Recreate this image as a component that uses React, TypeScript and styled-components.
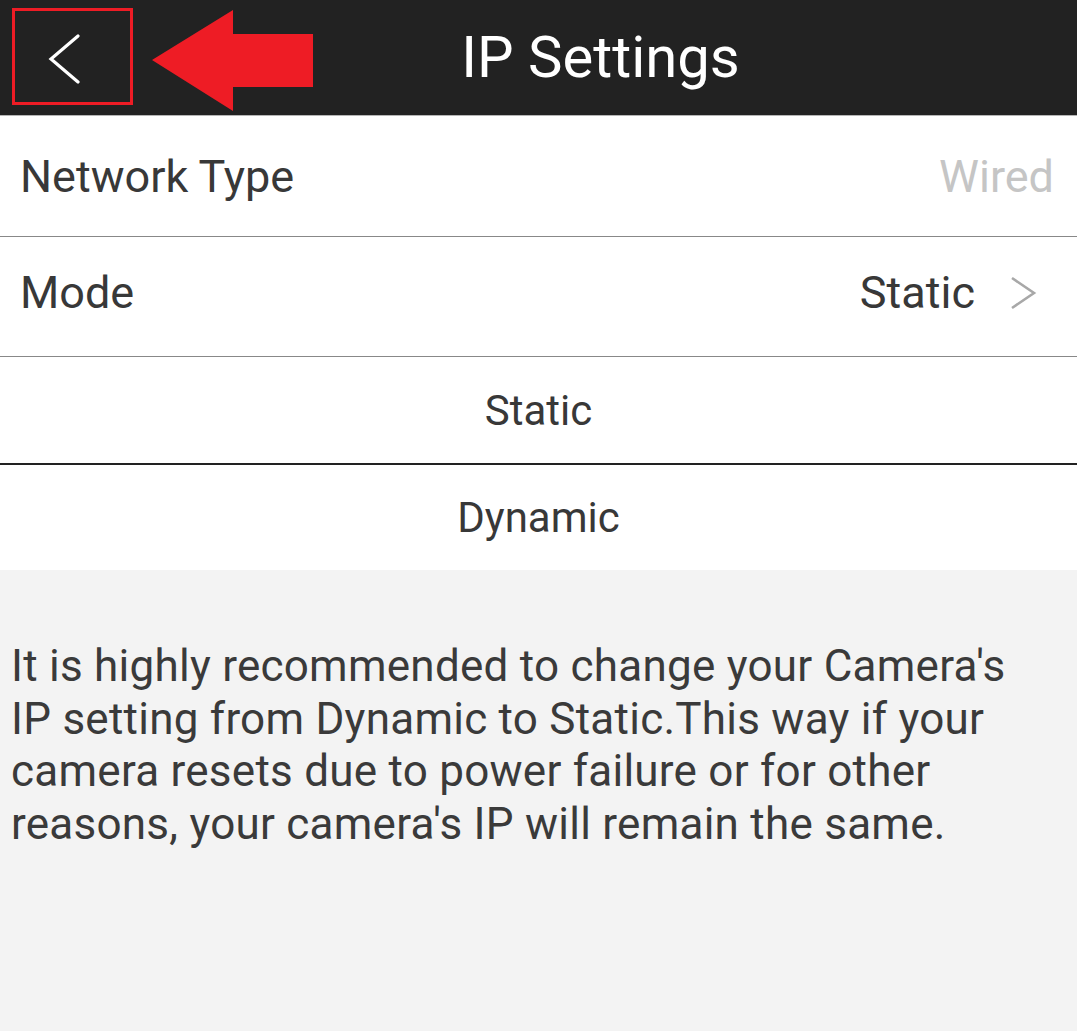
import React from "react";
import styled, { createGlobalStyle } from "styled-components";

const Global = createGlobalStyle`
  html, body { margin: 0; padding: 0; background: #f3f3f3; }
  body { font-family: Roboto, "Noto Sans", sans-serif; }
`;

const Page = styled.div`
  width: 1077px;
  min-height: 1031px;
  background: #f3f3f3;
  display: flex;
  flex-direction: column;
`;

const Header = styled.header`
  position: relative;
  height: 116px;
  background: #222222;
  border-bottom: 1px solid #b5b5b5;
  display: flex;
  align-items: center;
  box-sizing: border-box;
`;

const BackSlot = styled.div`
  width: 140px;
  height: 100%;
  display: flex;
  align-items: center;
  padding-left: 48px;
  box-sizing: border-box;
`;

const Title = styled.h1`
  flex: 1;
  margin: 0;
  padding-right: 16px;
  text-align: center;
  color: #ffffff;
  font-size: 58px;
  font-weight: 400;
  line-height: 1;
  padding-bottom: 2px;
`;

const Highlight = styled.div`
  position: absolute;
  left: 12px;
  top: 8px;
  width: 121px;
  height: 97px;
  border: 3px solid #ee1c25;
  box-sizing: border-box;
  pointer-events: none;
`;

const Pointer = styled.svg`
  position: absolute;
  left: 152px;
  top: 10px;
`;

const List = styled.div`
  background: #ffffff;
  display: flex;
  flex-direction: column;
`;

const Row = styled.div<{ $h: number; $line?: string }>`
  height: ${(p) => p.$h}px;
  display: flex;
  align-items: center;
  justify-content: space-between;
  box-sizing: border-box;
  border-bottom: ${(p) => (p.$line ? `1px solid ${p.$line}` : "none")};
  padding: 0 0 0 20px;
`;

const Label = styled.span<{ $dy?: number }>`
  font-size: 45px;
  color: #383838;
  position: relative;
  top: ${(p) => p.$dy ?? 0}px;
`;

const Value = styled.span<{ $muted?: boolean }>`
  font-size: 45px;
  color: ${(p) => (p.$muted ? "#c5c5c5" : "#383838")};
`;

const Trail = styled.div<{ $pr: number; $dy?: number }>`
  display: flex;
  align-items: center;
  gap: 34px;
  padding-right: ${(p) => p.$pr}px;
  position: relative;
  top: ${(p) => p.$dy ?? 0}px;
`;

const Option = styled.div<{ $h: number; $line?: boolean }>`
  height: ${(p) => p.$h}px;
  display: flex;
  align-items: center;
  justify-content: center;
  box-sizing: border-box;
  border-bottom: ${(p) => (p.$line ? "2px solid #222222" : "none")};
`;

const OptionText = styled.span`
  font-size: 42px;
  color: #383838;
`;

const Note = styled.p`
  margin: 0;
  padding: 70px 28px 0 11px;
  font-size: 44px;
  letter-spacing: 0.25px;
  line-height: 52.7px;
  color: #3a3a3a;
`;

export default function App() {
  return (
    <>
      <Global />
      <Page>
        <Header>
          <BackSlot>
            <svg width="34" height="52" viewBox="0 0 34 52">
              <polyline
                points="30,4 3,27 30,50"
                fill="none"
                stroke="#ffffff"
                strokeWidth="3.2"
                strokeLinecap="round"
                strokeLinejoin="miter"
              />
            </svg>
          </BackSlot>
          <Title>IP Settings</Title>
          <Highlight />
          <Pointer width="162" height="102" viewBox="0 0 162 102">
            <polygon points="0,50 81,0 81,24 161,24 161,77 81,77 81,101" fill="#ee1c25" />
          </Pointer>
        </Header>
        <List>
          <Row $h={121} $line="#888888">
            <Label>Network Type</Label>
            <Trail $pr={23}>
              <Value $muted>Wired</Value>
            </Trail>
          </Row>
          <Row $h={120} $line="#888888">
            <Label $dy={-4}>Mode</Label>
            <Trail $pr={40} $dy={-4}>
              <Value>Static</Value>
              <svg width="28" height="36" viewBox="0 0 28 36">
                <polyline
                  points="3,3 25,18 3,33"
                  fill="none"
                  stroke="#a8a8a8"
                  strokeWidth="2.6"
                />
              </svg>
            </Trail>
          </Row>
          <Option $h={108} $line>
            <OptionText>Static</OptionText>
          </Option>
          <Option $h={105}>
            <OptionText>Dynamic</OptionText>
          </Option>
        </List>
        <Note>
          It is highly recommended to change your Camera's IP setting from Dynamic to
          Static.This way if your camera resets due to power failure or for other
          reasons, your camera's IP will remain the same.
        </Note>
      </Page>
    </>
  );
}
